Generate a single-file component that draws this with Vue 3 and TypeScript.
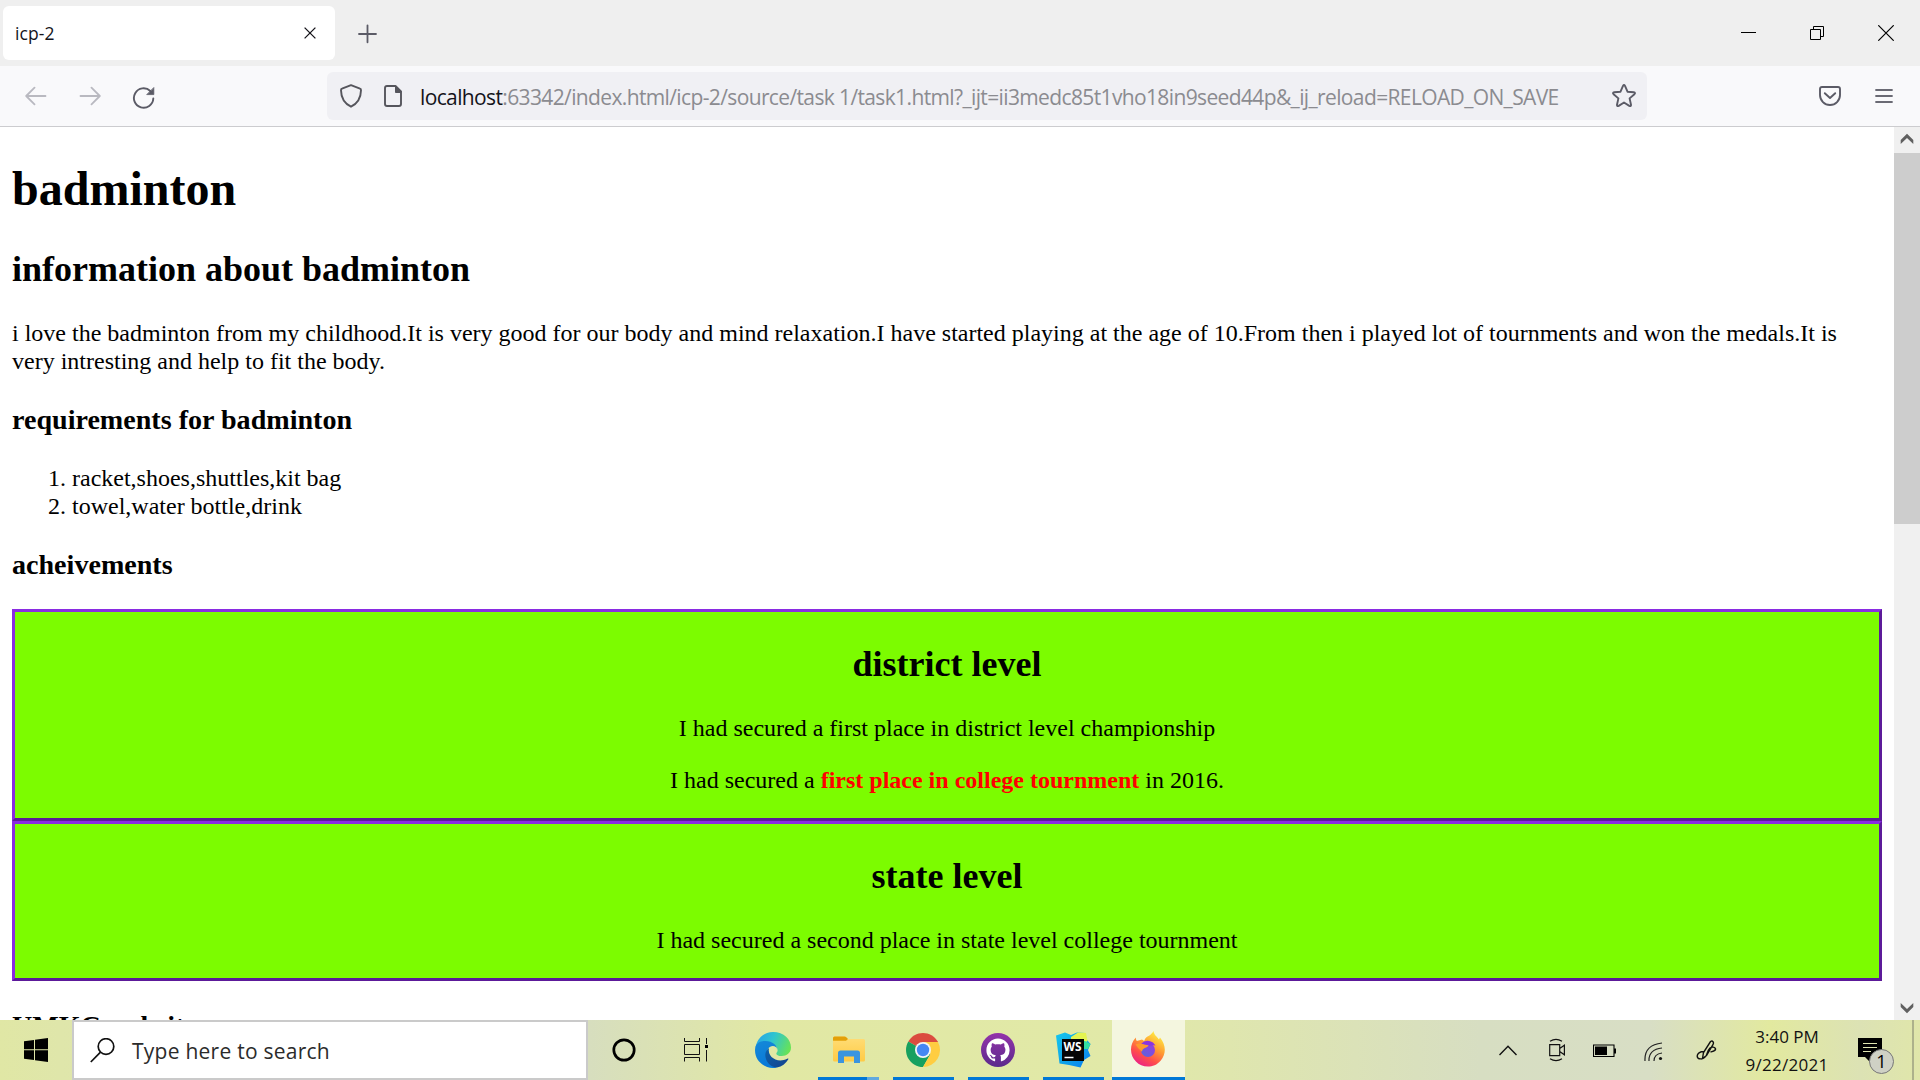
<script setup lang="ts">
const requirements: string[] = ['racket,shoes,shuttles,kit bag', 'towel,water bottle,drink']
</script>

<template>
  <div class="screen">
    <header class="tabs">
      <div class="tab">
        <span class="tab-title">icp-2</span>
        <svg width="12" height="12" viewBox="0 0 12 12" fill="none" stroke="#15141a" stroke-width="1.3"><path d="M.6.6 11.4 11.4M11.4.6.6 11.4" /></svg>
      </div>
      <svg class="plus" width="20" height="20" viewBox="0 0 20 20" stroke="#5b5b66" stroke-width="1.8" stroke-linecap="round"><path d="M10.500 1.300V18.300M2 10H19" /></svg>
      <div class="window-buttons">
        <svg width="16" height="16" viewBox="0 0 16 16"><path d="M1 7.500H16" stroke="#000" /></svg>
        <svg width="16" height="16" viewBox="0 0 16 16" fill="none" stroke="#000"><path d="M1.500 4.500h10v10h-10zM4.500 4.500v-3h10v10h-3" /></svg>
        <svg width="16" height="16" viewBox="0 0 16 16" stroke="#000" stroke-width="1.2"><path d="M.3.3 15.700 15.700M15.700.3.3 15.700" /></svg>
      </div>
    </header>

    <nav class="toolbar">
      <svg class="back" width="22" height="20" viewBox="0 0 22 20" fill="none" stroke="#b9b9c0" stroke-width="1.8" stroke-linecap="round" stroke-linejoin="round"><path d="M20.500 10H1.500M9.500 1.700 1.200 10l8.300 8.300" /></svg>
      <svg class="forward" width="22" height="20" viewBox="0 0 22 20" fill="none" stroke="#b9b9c0" stroke-width="1.8" stroke-linecap="round" stroke-linejoin="round"><path d="M1.500 10h19M12.500 1.700 20.800 10l-8.300 8.300" /></svg>
      <svg class="reload" width="24" height="24" viewBox="0 0 24 24" fill="none" stroke="#5b5b66" stroke-width="1.9" stroke-linecap="round"><path d="M21.300 12.500A9.700 9.700 0 1 1 18.300 5" /><path d="M21.800 1.900v6.700h-6.700z" fill="#5b5b66" stroke-width=".8" stroke-linejoin="round" /></svg>
      <div class="url-bar">
        <svg class="shield" width="22" height="24" viewBox="0 0 22 24" fill="none" stroke="#55555c" stroke-width="1.9" stroke-linejoin="round"><path d="M11 1.200 20 4.700Q21 5 21 6.200C20.900 14 17.300 19.500 11 22.700 4.700 19.500 1.100 14 1 6.200Q1 5 2 4.700Z" /></svg>
        <svg class="doc" width="18" height="22" viewBox="0 0 18 22" fill="none" stroke="#55555c" stroke-width="1.9" stroke-linejoin="round"><path d="M3 1h8.500L17 6.500V19q0 2-2 2H3q-2 0-2-2V3q0-2 2-2Z" /><path d="M11.500 1 17 6.500V7.500h-5.500Z" fill="#55555c" stroke-width="1" /></svg>
        <span class="url"><b>localhost</b>:63342/index.html/icp-2/source/task 1/task1.html?_ijt=ii3medc85t1vho18in9seed44p&amp;_ij_reload=RELOAD_ON_SAVE</span>
        <svg class="star" width="24" height="24" viewBox="0 0 24 24" fill="none" stroke="#5b5b66" stroke-width="1.9" stroke-linejoin="round"><path d="M11 1.900q1-1.800 2 0l2.500 5.800 6.300.6q2 .4.600 1.900l-4.800 4.200 1.400 6.300q.2 2-1.700 1.200L12 18.500 6.700 21.900q-1.900.8-1.700-1.200l1.400-6.300-4.800-4.200q-1.400-1.500.6-1.900l6.300-.6Z" /></svg>
      </div>
      <svg class="pocket" width="22" height="20" viewBox="0 0 22 20" fill="none" stroke="#5b5b66" stroke-width="1.9" stroke-linecap="round" stroke-linejoin="round"><path d="M3 1h16q2 0 2 2v6a10 10 0 0 1-20 0V3q0-2 2-2Z" /><path d="m5.800 7.200 5.200 4.800 5.200-4.800" /></svg>
      <svg class="menu" width="18" height="16" viewBox="0 0 18 16" stroke="#6a6a74" stroke-width="1.800" stroke-linecap="round"><path d="M1 2h16M1 8h16M1 14h16" /></svg>
    </nav>

    <div class="viewport">
      <main class="page">
        <h1>badminton</h1>
        <h2>information about badminton</h2>
        <p>i love the badminton from my childhood.It is very good for our body and mind relaxation.I have started playing at the age of 10.From then i played lot of tournments and won the medals.It is very intresting and help to fit the body.</p>
        <h3>requirements for badminton</h3>
        <ol>
          <li v-for="item in requirements" :key="item">{{ item }}</li>
        </ol>
        <h3>acheivements</h3>
        <section class="level">
          <h2>district level</h2>
          <p>I had secured a first place in district level championship</p>
          <p>I had secured a <strong>first place in college tournment</strong> in 2016.</p>
        </section>
        <section class="level">
          <h2>state level</h2>
          <p>I had secured a second place in state level college tournment</p>
        </section>
        <h3 class="website">UMKC website</h3>
      </main>
      <aside class="scrollbar">
        <svg width="14" height="12" viewBox="0 0 14 12"><path d="M7 .8 13.300 7v4L7 4.900.7 11V7Z" fill="#606060" /></svg>
        <div class="thumb"></div>
        <svg width="14" height="12" viewBox="0 0 14 12"><path d="M7 11.200.7 5V1L7 7.100 13.300 1v4Z" fill="#606060" /></svg>
      </aside>
    </div>

    <footer class="taskbar">
      <div class="start">
        <svg width="24" height="24" viewBox="0 0 24 24"><path d="M0 3.300 10 1.900V11.300H0ZM11 1.700 24 0V11.300H11ZM0 12.300H10V22L0 20.700ZM11 12.300H24V24L11 22.200Z" /></svg>
      </div>
      <div class="search">
        <svg width="25" height="25" viewBox="0 0 25 25" fill="none" stroke="#111" stroke-width="1.700"><circle cx="16" cy="8.500" r="7.800" /><path d="M10.500 14.200.8 24" /></svg>
        <span>Type here to search</span>
      </div>
      <div class="cell narrow">
        <svg width="24" height="24" viewBox="0 0 24 24" fill="none" stroke="#000" stroke-width="2.700"><circle cx="12" cy="12" r="10.200" /></svg>
      </div>
      <div class="cell narrow">
        <svg width="24" height="24" viewBox="0 0 24 24" fill="none" stroke="#111"><path d="M.5 0v3.500h15V0M.5 6.500h15v10H.5zM.5 23.500v-4h15v4M22.500 0v6M22.500 12v11.500" /><path d="M21 7h3v3h-3z" fill="#000" stroke="none" /></svg>
      </div>
      <div class="cell edge app">
        <svg width="36" height="36" viewBox="0 0 36 36">
          <defs>
            <linearGradient id="eg" x1="0" y1=".3" x2="1" y2=".6"><stop stop-color="#27a5e8" /><stop offset=".45" stop-color="#30c5cf" /><stop offset="1" stop-color="#68e355" /></linearGradient>
            <linearGradient id="eb" x1="0" y1="0" x2=".4" y2="1"><stop stop-color="#1689d8" /><stop offset="1" stop-color="#0879d8" /></linearGradient>
            <linearGradient id="ed" x1="0" y1="0" x2="1" y2="1"><stop stop-color="#0b63ad" /><stop offset="1" stop-color="#15418c" /></linearGradient>
          </defs>
          <path d="M.5 15.500C2 6 9.300 0 18 0c11 0 18 7.500 18 15.500 0 5.500-4.500 8.500-9.200 8.500-5 0-6.300-2-5-3.400 1.800-2 .7-6.600-3.900-7.600Z" fill="url(#eg)" />
          <path d="M.2 16C1.200 10.500 6 8.800 10.500 9c7 .2 11.600 4.200 11.600 9 0-2.600-2-4-4.300-4-4 0-7.300 4.500-6.500 10 .7 5 5 9.700 10.700 11.400C11 38.200-1.600 29 .2 16Z" fill="url(#eb)" />
          <path d="M14 16C10.500 18.200 9.500 22.500 11 27c1.500 4.800 6 8.400 11 8.500 5-1 8.700-4 11.200-8 .6-1-.2-1.300-1-.8C23 31.500 12 25.500 14 16Z" fill="url(#ed)" />
        </svg>
      </div>
      <div class="cell running files">
        <svg width="32" height="28" viewBox="0 0 32 28">
          <defs><linearGradient id="fg" x1="0" y1="0" x2="0" y2="1"><stop stop-color="#ffdd78" /><stop offset="1" stop-color="#ffcb45" /></linearGradient></defs>
          <path d="M0 2q0-1.500 1.500-1.500h10q1 0 2 1L15 3h15.500Q32 3 32 4.500V24q0 1.500-1.500 1.500h-29Q0 25.500 0 24Z" fill="url(#fg)" />
          <path d="M0 2q0-1.500 1.500-1.500h10q1 0 2 1L15 3l-2 1.800H0Z" fill="#e3a008" />
          <path d="M5 27V17q0-2.500 2.500-2.500h17Q27 14.500 27 17v10h-6v-6.500H11V27Z" fill="#3a95df" />
        </svg>
      </div>
      <div class="cell running app">
        <svg width="34" height="34" viewBox="0 0 34 34">
          <path d="M17 17 2.300 8.500A17 17 0 0 1 31.700 8.500Z" fill="#db4c3f" />
          <path d="M17 17 2.300 8.500A17 17 0 0 0 17 34l7.400-12.800Z" fill="#17a05f" />
          <path d="M17 9H32a17 17 0 0 1-15 25l7.400-12.800Z" fill="#ffcd41" />
          <path d="M17 9H32l-.4-.8L25 8Z" fill="#db4c3f" />
          <circle cx="17" cy="17" r="8" fill="#f4f4f4" /><circle cx="17" cy="17" r="6.200" fill="#4587f3" />
        </svg>
      </div>
      <div class="cell running app">
        <svg width="34" height="34" viewBox="0 0 34 34">
          <defs><linearGradient id="gh" x1="0" y1="0" x2="0" y2="1"><stop stop-color="#9333aa" /><stop offset="1" stop-color="#5c2a8c" /></linearGradient></defs>
          <circle cx="17" cy="17" r="17" fill="url(#gh)" />
          <path transform="translate(5.400 5.600) scale(1.450)" fill="#fff" d="M8 0C3.580 0 0 3.580 0 8c0 3.540 2.290 6.530 5.470 7.590.4.070.55-.17.55-.38 0-.19-.01-.82-.01-1.490-2.010.37-2.530-.49-2.690-.94-.09-.23-.48-.94-.82-1.130-.28-.15-.68-.52-.01-.53.63-.01 1.080.58 1.230.82.72 1.210 1.870.87 2.330.66.070-.52.280-.87.510-1.070-1.780-.2-3.640-.89-3.640-3.950 0-.87.310-1.590.82-2.150-.08-.2-.36-1.020.08-2.120 0 0 .67-.21 2.200.82.640-.18 1.320-.27 2-.27s1.360.09 2 .27c1.530-1.040 2.200-.82 2.200-.82.440 1.100.16 1.920.08 2.120.51.56.82 1.270.82 2.150 0 3.070-1.870 3.750-3.650 3.950.29.250.54.730.54 1.480 0 1.070-.01 1.930-.01 2.200 0 .21.150.46.550.38A8.010 8.010 0 0 0 16 8c0-4.420-3.580-8-8-8Z" />
        </svg>
      </div>
      <div class="cell running app">
        <svg width="36" height="36" viewBox="0 0 36 36">
          <defs><linearGradient id="ws" x1="0" y1="0" x2="1" y2="1"><stop stop-color="#16c7ed" /><stop offset=".5" stop-color="#0fa5e8" /><stop offset="1" stop-color="#087cf2" /></linearGradient></defs>
          <path d="M1 3.500 10 .5l6 2.500 6-2.500 8 .5 2 7 3.500 4-2.500 6 2.500 6-6.500 4-3.500 7.500L14 33 4.500 31.500Z" fill="url(#ws)" />
          <path d="M16 5 23 .5l8 .5 1.500 8L28 12V7H16Z" fill="#e4f450" /><path d="m30 9 5.500 3-2.500 5h-4V9Z" fill="#33dca0" />
          <rect x="7" y="7" width="22" height="22" fill="#050505" />
          <text x="8.600" y="18.500" fill="#fff" font-family="Open Sans, sans-serif" font-weight="700" font-size="12" textLength="18" lengthAdjust="spacingAndGlyphs">WS</text>
          <path d="M9.500 25.500h9" stroke="#fff" stroke-width="1.500" />
        </svg>
      </div>
      <div class="cell running active app">
        <svg width="34" height="36" viewBox="0 0 34 36">
          <defs>
            <linearGradient id="ff" x1=".8" y1=".05" x2=".25" y2="1"><stop stop-color="#fff044" /><stop offset=".4" stop-color="#ff9a32" /><stop offset=".7" stop-color="#ff4d4b" /><stop offset="1" stop-color="#e91e8c" /></linearGradient>
            <linearGradient id="fp" x1="1" y1="0" x2="0" y2="1"><stop stop-color="#a038dd" /><stop offset="1" stop-color="#5668dc" /></linearGradient>
          </defs>
          <path d="M22.500 0c.4 4 3.600 5.500 5.500 8.500l1-2c6 7 6.500 16.500.8 23C26 34 21.500 35.500 17 35.500 7.500 35.500 0 28 0 18.500 0 14 1.600 10 4.800 6.500c0 1.500.3 2.700 1 3.600L11 8.400l2.200 1.500C14 7 16 5.500 18 4.800 19.500 4 21.500 2 22.500 0Z" fill="url(#ff)" />
          <circle cx="17" cy="19" r="7" fill="url(#fp)" />
          <path d="M10 13q5-5.500 12-1.500l2.500 3q-4-.5-6.500.5-3.500-2.500-8-2Z" fill="#8a35e0" />
          <path d="M4.500 13.500q4.500-2.200 8 0l5 .8q0 1.700-4.200 3-2.500 1.200-2.300 3.500-4-3-6.500-7.300Z" fill="#ff9a2c" />
        </svg>
      </div>
      <div class="tray">
        <svg class="t-up" width="18" height="11" viewBox="0 0 18 11" fill="none" stroke="#111" stroke-width="1.400"><path d="M.5 10 9 1.200 17.500 10" /></svg>
        <svg class="t-cam" width="17" height="24" viewBox="0 0 17 24" fill="none" stroke="#111" stroke-width="1.200"><path d="M.7 6.600h10v11h-10zM10.700 10.500l4.700-3.300v9.600l-4.700-3.300M1 3.200q6-3.500 12 0M1 20.800q6 3.500 12 0" /></svg>
        <svg class="t-bat" width="23" height="14" viewBox="0 0 23 14"><path d="M.5 1h20.500v11.500H.5z" fill="none" stroke="#000" stroke-width="1.100" /><path d="M2 2.500h12v8.500H2zM21 4.500h2v5h-2z" /></svg>
        <svg class="t-wifi" width="19" height="19" viewBox="0 0 19 19" fill="none" stroke="#222" stroke-width="1.200"><path d="M1 19Q0 3 18 1M5 19Q4.500 7.500 18 6M10 19q0-7 8-8" /><circle cx="16.500" cy="16.500" r="1.600" fill="#111" stroke="none" /></svg>
        <svg class="t-pen" width="21" height="21" viewBox="0 0 21 21" fill="none" stroke="#111" stroke-width="1.400"><path d="m6.500 18.500 1-6 7-11q1.600-1 2.500.3 1 1-.2 3l-6.300 10.700ZM8 11.500c-4 0-7 2-6.800 4.700C1.500 20 8 20 10.500 15c1-2 1.500-5 3.500-7 2-1.500 5-1 5.500.8.500 2.200-3 2.500-5 3.200" /></svg>
        <div class="clock"><span class="time">3:40 PM</span><span class="date">9/22/2021</span></div>
        <div class="notice">
          <svg width="24" height="24" viewBox="0 0 24 24"><path d="M0 0h24v19H14.500L12 24 7 19H0Z" /><path d="M5 5.500h14M5 9.500h14M5 13.500h8" stroke="#dfe5b0" stroke-width="1" /></svg>
          <span class="badge">1</span>
        </div>
        <i class="peek"></i>
      </div>
    </footer>
  </div>
</template>

<style>
body { margin: 0; overflow: hidden; }
</style>

<style scoped>
* { box-sizing: border-box; }
svg { display: block; flex: none; }
.screen { width: 1920px; height: 1080px; display: flex; flex-direction: column; overflow: hidden; background: #fff; font-family: "Open Sans", "Noto Sans", sans-serif; }
.tabs { height: 66px; flex: none; display: flex; align-items: center; background: #efefef; padding-left: 3px; }
.tab { width: 332px; height: 54px; background: #fff; border-radius: 6px; display: flex; align-items: center; justify-content: space-between; padding: 0 19px 0 12px; color: #15141a; }
.tab-title { font-size: 17.5px; letter-spacing: .1px; }
.plus { margin-left: 22px; margin-top: 2px; }
.window-buttons { margin-left: auto; display: flex; gap: 53px; padding-right: 26px; }
.toolbar { height: 61px; flex: none; display: flex; align-items: center; background: #f9f9fb; border-bottom: 1px solid #cccccf; padding-left: 25px; }
.forward { margin-left: 32px; }
.reload { margin-left: 31px; margin-top: 3px; }
.url-bar { margin-left: 171px; width: 1320px; height: 48px; border-radius: 6px; background: #f0f0f4; display: flex; align-items: center; padding: 0 11px 0 13px; }
.doc { margin-left: 22px; }
.url { margin-left: 18px; padding-top: 2px; font-size: 21px; line-height: 28px; letter-spacing: -.63px; white-space: nowrap; color: #8b8b90; }
.url b { font-weight: 400; color: #15141a; }
.star { margin-left: auto; }
.pocket { margin-left: 172px; }
.menu { margin-left: 34px; }
.viewport { height: 893px; flex: none; display: flex; }
.page { flex: 1; height: 893px; overflow: hidden; padding: 0 12px; color: #000; font: 24px/28px "Liberation Serif", "Times New Roman", serif; }
h1, h2, h3, p, ol { margin: 0; }
h1 { font-size: 48px; line-height: 55px; margin: 34px 0 32px; }
h2 { font-size: 36px; line-height: 42px; margin: 31px 0 29px; }
h3 { font-size: 28.08px; line-height: 32px; margin: 29px 0 28px; }
p, ol { margin: 24px 0; }
ol { padding-left: 60px; }
.level { display: flow-root; border: 3px solid; border-color: #8a2be2 #5c1a99 #5c1a99 #8a2be2; background: #7cfc00; text-align: center; }
.level strong { color: red; }
.scrollbar { width: 26px; background: #f0f0f0; display: flex; flex-direction: column; align-items: center; padding: 6px 0; }
.thumb { width: 26px; height: 371px; margin: 8px 0 auto; background: #cdcdcd; }
.taskbar { height: 60px; flex: none; display: flex; background: linear-gradient(90deg, #e0e7a5 0, #dfe6aa 60px, #d7debe 590px, #e1e8a4 770px, #e1e9a8 1130px, #dfe6ae 1230px, #d7dec2 1480px, #d8dec5 1650px, #e2e99f 1770px, #dce2b4 1860px, #e0e6aa 1920px); }
.start { width: 72px; display: flex; align-items: center; padding-left: 24px; }
.search { width: 516px; border: 2px solid #cacaca; background: #fff; display: flex; align-items: center; padding-left: 16px; color: #2b2b2b; }
.search span { margin-left: 17px; padding-top: 2px; font-size: 21px; line-height: 28px; letter-spacing: .25px; white-space: nowrap; }
.cell { width: 75px; position: relative; display: flex; align-items: center; justify-content: center; }
.narrow { width: 72px; }
.edge { margin-left: 4px; }
.app svg { margin-right: 2px; }
.running::after { content: ""; position: absolute; bottom: 0; left: 7px; width: 61px; height: 3px; background: #0078d7; }
.files::after { background: linear-gradient(90deg, #0078d7 49px, #60a9df 49px); }
.active { background: #f4f6df; width: 73px; margin-left: 1px; }
.active svg { margin-bottom: 2px; }
.active::after { left: 0; width: 73px; }
.tray { margin-left: auto; width: 421px; display: flex; align-items: center; }
.t-cam { margin-left: 32px; }
.t-bat { margin-left: 27px; margin-top: 1px; }
.t-wifi { margin-left: 28px; margin-top: 2px; }
.t-pen { margin-left: 33px; }
.clock { width: 110px; margin-left: 15px; height: 60px; padding-top: 3px; display: flex; flex-direction: column; align-items: center; font-size: 17px; line-height: 28px; color: #111; white-space: nowrap; }
.date { letter-spacing: .3px; }
.notice { position: relative; margin-left: 16px; }
.badge { position: absolute; left: 11px; top: 11px; width: 25px; height: 25px; border: 1px solid #777; border-radius: 50%; background: #cfd1c5; font-size: 18px; line-height: 23px; text-align: center; }
.peek { width: 2px; height: 60px; margin-left: auto; margin-right: 6px; background: #adb18b; }
</style>
